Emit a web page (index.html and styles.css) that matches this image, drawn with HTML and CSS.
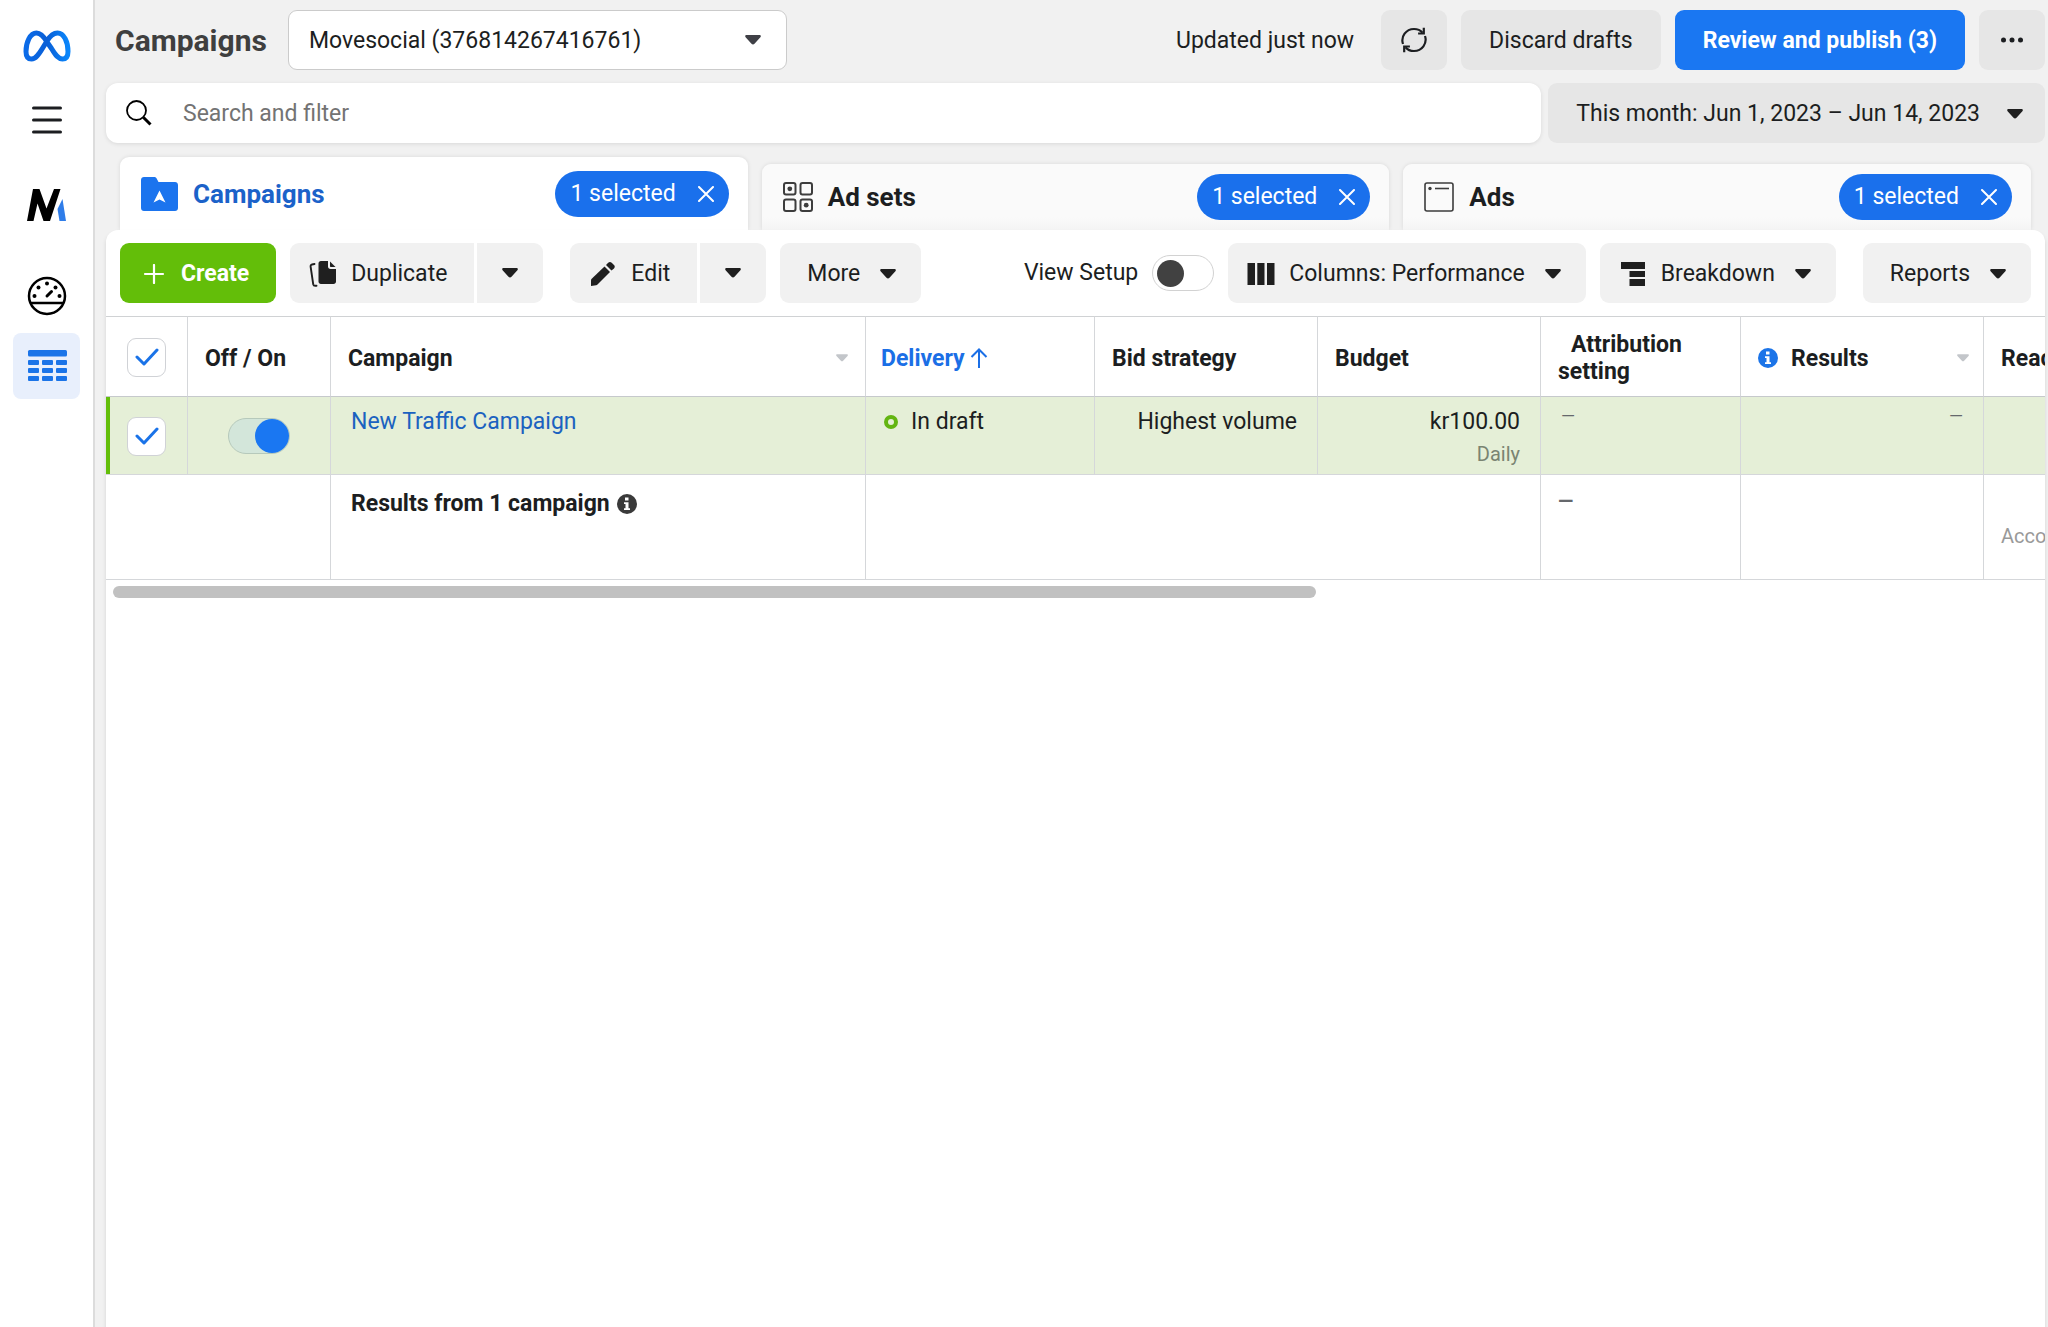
FILE: index.html
```html
<!DOCTYPE html>
<html lang="en">
<head>
<meta charset="utf-8">
<title>Campaigns</title>
<meta name="viewport" content="width=device-width, initial-scale=1">
<link rel="stylesheet" href="styles.css">
</head>
<body>
<svg class="defs" aria-hidden="true">
  <symbol id="caret" viewBox="0 0 16 10"><path d="M1.5 0h13c1.2 0 1.8 1.3.9 2.200L9.500 8.800c-.8.9-2.200.9-3 0L.6 2.200C-.2 1.300.3 0 1.500 0z"/></symbol>
  <symbol id="close" viewBox="0 0 16 16"><path d="M1 1l14 14M15 1L1 15" fill="none" stroke="currentColor" stroke-width="2" stroke-linecap="round"/></symbol>
  <symbol id="check" viewBox="0 0 24 18"><path d="M2 9l7 7L22 2" fill="none" stroke="currentColor" stroke-width="3" stroke-linecap="round" stroke-linejoin="round"/></symbol>
  <symbol id="info" viewBox="0 0 20 20"><circle cx="10" cy="10" r="10"/><path d="M8 3.500h3.500v3H8zM7 8.300h4.500v6H13V16H7v-1.700h1.500V10H7z" fill="#fff"/></symbol>
</svg>
<div class="app">
  <nav class="rail" aria-label="Main">
    <a class="rail-item" href="#" aria-label="Home">
      <svg width="48" height="32" viewBox="0 0 48 32" fill="none" stroke-width="5" stroke-linecap="round" stroke-linejoin="round">
        <defs><linearGradient id="loop" x1="0" x2="1"><stop offset="0" stop-color="#0b6be8"/><stop offset=".5" stop-color="#0a5fd6"/><stop offset="1" stop-color="#0a86fb"/></linearGradient></defs>
        <path stroke="url(#loop)" d="M24 12C20.500 6 17.500 3 13.500 3 7 3 3 12.500 3 21.500 3 26.500 5 29 8.500 29c4 0 7-4 11.500-11.500L24 11c3-5 6.500-8 10.500-8C41 3 45 12 45 21.500c0 5-2 7.500-5.500 7.500-4 0-6.500-3-11-10.500z"/>
      </svg>
    </a>
    <button class="rail-item rail-menu" type="button" aria-label="Menu">
      <svg width="30" height="28" viewBox="0 0 30 28" stroke="#1c1e21" stroke-width="3" stroke-linecap="round"><path d="M1.500 2h27M1.500 14h27M1.500 26h27"/></svg>
    </button>
    <a class="rail-item rail-brand" href="#" aria-label="Movesocial">
      <svg width="40" height="34" viewBox="0 0 40 34"><path d="M6 1h6.500l7 19.500L27 1h6.500L23 33h-6.500L10.500 15.500 6.500 33H0z"/><path d="M35.500 11L39 33h-6.500l-2-12z" fill="#2f7de9"/></svg>
    </a>
    <a class="rail-item rail-gauge" href="#" aria-label="Account overview">
      <svg width="40" height="40" viewBox="0 0 40 40"><g fill="none" stroke="#000"><circle cx="20" cy="20" r="18" stroke-width="2.500"/><path d="M3 27h34" stroke-width="2.500"/><path d="M20 20l4.500-4.500" stroke-width="3" stroke-linecap="round"/></g><circle cx="7.500" cy="20" r="2"/><circle cx="11.500" cy="11.500" r="2"/><circle cx="20" cy="7.500" r="2"/><circle cx="28.500" cy="11.500" r="2"/><circle cx="32.500" cy="20" r="2"/></svg>
    </a>
    <a class="rail-item rail-active" href="#" aria-label="Campaigns" aria-current="page">
      <svg width="40" height="32" viewBox="0 0 40 32" fill="#1b74e8"><rect x="1" width="39" height="6.500" rx="1.500"/><rect x="1" y="10" width="11" height="5" rx="1"/><rect x="15" y="10" width="11" height="5" rx="1"/><rect x="29" y="10" width="11" height="5" rx="1"/><rect x="1" y="18" width="11" height="5" rx="1"/><rect x="15" y="18" width="11" height="5" rx="1"/><rect x="29" y="18" width="11" height="5" rx="1"/><rect x="1" y="26" width="11" height="5" rx="1"/><rect x="15" y="26" width="11" height="5" rx="1"/><rect x="29" y="26" width="11" height="5" rx="1"/></svg>
    </a>
  </nav>

  <main class="main">
    <header class="topbar">
      <h1 class="title">Campaigns</h1>
      <div class="account">
        <select class="account-select" aria-label="Ad account"><option>Movesocial (376814267416761)</option></select>
        <svg class="account-caret" width="16" height="10"><use href="#caret"/></svg>
      </div>
      <span class="updated">Updated just now</span>
      <button class="btn btn-gray btn-icon" type="button" aria-label="Refresh">
        <svg width="26" height="26" viewBox="0 0 26 26" fill="none" stroke="currentColor" stroke-width="2.200"><path d="M2 17C-.5 9.500 5 2 13 2c3.500 0 6.500 1.300 8.500 3.800M24 9c2.500 7.500-3 15-11 15-3.500 0-6.500-1.300-8.500-3.800"/><path d="M22.800.8v5.700h-5.700M3.200 25.200v-5.700h5.700"/></svg>
      </button>
      <button class="btn btn-gray" type="button">Discard drafts</button>
      <button class="btn btn-blue" type="button">Review and publish (3)</button>
      <button class="btn btn-gray btn-icon" type="button" aria-label="More options">
        <svg width="22" height="6" viewBox="0 0 22 6" fill="currentColor"><circle cx="2.500" cy="3" r="2.500"/><circle cx="11" cy="3" r="2.500"/><circle cx="19.500" cy="3" r="2.500"/></svg>
      </button>
    </header>

    <div class="filters">
      <div class="search">
        <svg width="26" height="26" viewBox="0 0 26 26" fill="none" stroke="#000"><circle cx="10.500" cy="10.500" r="9.500" stroke-width="1.800"/><path d="M17.500 17.500l7 7" stroke-width="3"/></svg>
        <input class="search-input" type="search" placeholder="Search and filter" aria-label="Search and filter">
      </div>
      <button class="btn btn-gray btn-date" type="button" aria-haspopup="dialog">This month: Jun 1, 2023 – Jun 14, 2023 <svg width="16" height="10"><use href="#caret"/></svg></button>
    </div>

    <div class="tabs">
      <section class="tab tab-current">
        <a class="tab-link" href="#">
          <svg width="37" height="34" viewBox="0 0 37 34"><path d="M3 0h10c1 0 2 .5 2.500 1.300L17.500 5H34c1.700 0 3 1.300 3 3v23c0 1.700-1.300 3-3 3H3c-1.700 0-3-1.300-3-3V3c0-1.700 1.300-3 3-3z" fill="#1b74ee"/><path d="M18.500 13.500l6 12-6-3-6 3z" fill="#fff"/></svg>
          Campaigns</a>
        <button class="pill" type="button">1 selected <svg width="16" height="16"><use href="#close"/></svg></button>
      </section>
      <section class="tab">
        <a class="tab-link" href="#">
          <svg width="30" height="30" viewBox="0 0 30 30" fill="none" stroke="#3d3d3d" stroke-width="2"><rect x="1" y="1" width="11.500" height="11.500" rx="2"/><rect x="17.500" y="1" width="11.500" height="11.500" rx="2"/><rect x="1" y="17.500" width="11.500" height="11.500" rx="2"/><rect x="17.500" y="17.500" width="11.500" height="11.500" rx="2"/><g fill="#3d3d3d" stroke="none"><circle cx="6.800" cy="6.800" r="2.400"/><circle cx="23.200" cy="23.200" r="2.400"/></g></svg>
          Ad sets</a>
        <button class="pill" type="button">1 selected <svg width="16" height="16"><use href="#close"/></svg></button>
      </section>
      <section class="tab">
        <a class="tab-link" href="#">
          <svg width="30" height="30" viewBox="0 0 30 30" fill="none" stroke="#3d3d3d" stroke-width="1.600"><rect x="1" y="1" width="28" height="28" rx="2"/><path d="M11 6.500h14"/><circle cx="6" cy="6.500" r="1.700" fill="#3d3d3d" stroke="none"/></svg>
          Ads</a>
        <button class="pill" type="button">1 selected <svg width="16" height="16"><use href="#close"/></svg></button>
      </section>
    </div>

    <section class="panel">
      <div class="toolbar">
        <button class="btn btn-green" type="button"><svg width="28" height="20" viewBox="0 0 28 20"><path d="M14 1v18M5 10h18" stroke="#fff" stroke-width="2.200" stroke-linecap="round"/></svg> Create</button>
        <div class="split">
          <button class="btn btn-tool btn-lead" type="button"><svg width="28" height="26" viewBox="0 0 28 26" fill="#1f1f1f"><path d="M12 0h7v5.500C19 7 20 8 21.500 8H27v12.500c0 1.500-1 2.500-2.500 2.500H12c-1.500 0-2.500-1-2.500-2.500v-18C9.500 1 10.500 0 12 0z"/><path d="M21 .5L26.500 6H22c-.6 0-1-.4-1-1z"/><path d="M5.500 3L3 3.500c-1 .2-1.600 1-1.400 2l2.600 17.700c.2 1 1 1.600 2 1.600h1.300" fill="none" stroke="#1f1f1f" stroke-width="1.900" stroke-linecap="round"/></svg> Duplicate</button>
          <button class="btn btn-tool btn-icon" type="button" aria-label="Duplicate options"><svg width="16" height="10"><use href="#caret"/></svg></button>
        </div>
        <div class="split split-edit">
          <button class="btn btn-tool btn-lead" type="button"><svg width="28" height="24" viewBox="0 0 28 24" fill="#1f1f1f"><path d="M15.500 4.500l5.500 5.500L8.500 22.500c-.4.400-.8.600-1.400.7L2 24v-5.500c0-.7.200-1.200.7-1.700z"/><path d="M17 3l2.200-2.200c1-1 2.500-1 3.500 0l2.300 2.300c1 1 1 2.300 0 3.300L22.500 8.500z"/></svg> Edit</button>
          <button class="btn btn-tool btn-icon" type="button" aria-label="Edit options"><svg width="16" height="10"><use href="#caret"/></svg></button>
        </div>
        <button class="btn btn-tool btn-drop" type="button" aria-haspopup="menu">More <svg width="16" height="10"><use href="#caret"/></svg></button>
        <label class="view-setup" for="view-setup">View Setup <input class="switch" type="checkbox" id="view-setup"></label>
        <button class="btn btn-tool btn-lead btn-drop" type="button" aria-haspopup="menu"><svg class="lead" width="28" height="22" viewBox="0 0 28 22" fill="#1f1f1f"><path d="M.5 0h7.500v22H.5zM10.300 0h7.200v22h-7.200zM20 0h7.500v22H20z"/></svg> Columns: Performance <svg width="16" height="10"><use href="#caret"/></svg></button>
        <button class="btn btn-tool btn-lead btn-drop" type="button" aria-haspopup="menu"><svg class="lead" width="28" height="24" viewBox="0 0 28 24" fill="#1f1f1f"><path d="M2 0h24v7H2zM10.500 9H26v6H10.500zM10.500 17H26v7H10.500z"/></svg> Breakdown <svg width="16" height="10"><use href="#caret"/></svg></button>
        <button class="btn btn-tool btn-drop btn-reports" type="button" aria-haspopup="menu">Reports <svg width="16" height="10"><use href="#caret"/></svg></button>
      </div>

      <div class="table-wrap">
        <table class="grid">
          <colgroup><col class="c-check"><col class="c-toggle"><col class="c-name"><col class="c-delivery"><col class="c-bid"><col class="c-bid"><col class="c-attr"><col class="c-results"><col></colgroup>
          <thead>
            <tr>
              <th class="center"><label class="tick"><input type="checkbox" aria-label="Select all" checked><svg width="24" height="18"><use href="#check"/></svg></label></th>
              <th>Off / On</th>
              <th><span class="head">Campaign <svg class="sort" width="12" height="8"><use href="#caret"/></svg></span></th>
              <th class="sorted"><span class="head">Delivery <svg width="18" height="20" viewBox="0 0 18 20" fill="none" stroke="currentColor" stroke-width="2"><path d="M9 20V2M1.500 9L9 1.500 16.500 9"/></svg></span></th>
              <th>Bid strategy</th>
              <th>Budget</th>
              <th class="indent">Attribution setting</th>
              <th class="results"><span class="head"><svg class="info" width="20" height="20" fill="#1b74e8"><use href="#info"/></svg> Results <svg class="sort" width="12" height="8"><use href="#caret"/></svg></span></th>
              <th>Reach</th>
            </tr>
          </thead>
          <tbody>
            <tr class="row">
              <td class="center mark"><label class="tick"><input type="checkbox" aria-label="Select New Traffic Campaign" checked><svg width="24" height="18"><use href="#check"/></svg></label></td>
              <td class="center"><input class="switch" type="checkbox" aria-label="New Traffic Campaign on" checked></td>
              <td><a class="name" href="#">New Traffic Campaign</a></td>
              <td><span class="status">In draft</span></td>
              <td class="num">Highest volume</td>
              <td class="num">kr100.00<small class="sub">Daily</small></td>
              <td class="muted">—</td>
              <td class="num muted">—</td>
              <td></td>
            </tr>
          </tbody>
          <tfoot>
            <tr class="total">
              <td colspan="2"></td>
              <td><strong class="sum">Results from 1 campaign <svg width="20" height="20" fill="#3a3a3a"><use href="#info"/></svg></strong></td>
              <td colspan="3"></td>
              <td class="tight muted"><strong>—</strong></td>
              <td></td>
              <td class="tight"><br><small class="sub sub-light">Accounts</small></td>
            </tr>
          </tfoot>
        </table>
      </div>
      <div class="scroll"><div class="thumb"></div></div>
    </section>
  </main>
</div>
</body>
</html>
```

FILE: styles.css
```css
*, *::before { box-sizing: border-box; }

body {
  margin: 0;
  background: #f1f1f1;
  color: #1c1e21;
  font: 400 23px/32px Roboto, "Liberation Sans", sans-serif;
}

button, input, select { font: inherit; color: inherit; margin: 0; }
button { border: 0; cursor: pointer; }
a { text-decoration: none; color: inherit; }
svg { display: block; flex: none; }
.defs { position: absolute; width: 0; height: 0; }

.app { display: flex; min-height: 100vh; }

/* Left rail */
.rail {
  flex: none;
  width: 95px;
  padding: 13px;
  background: #fff;
  border-right: 2px solid #dcdcdc;
  display: flex;
  flex-direction: column;
}
.rail-item {
  width: 67px;
  height: 66px;
  display: grid;
  place-items: center;
  background: none;
  padding: 0;
}
.rail-menu { margin-top: 8px; }
.rail-brand { margin-top: 19px; }
.rail-gauge { margin-top: 25px; }
.rail-active { margin-top: 4px; background: #e8effc; border-radius: 8px; }

.main {
  flex: 1;
  min-width: 0;
  padding: 10px 3px 0 11px;
  display: flex;
  flex-direction: column;
}

/* Buttons */
.btn {
  display: flex;
  align-items: center;
  justify-content: center;
  height: 60px;
  padding: 2px 27px 0;
  border-radius: 9px;
  white-space: nowrap;
  fill: #1f1f1f;
}
.btn-gray { background: #e6e6e6; padding: 2px 28px 0; }
.btn-blue { background: #1a77f2; color: #fff; font-weight: 700; padding: 2px 28px 0; }
.btn-green { background: #63be09; color: #fff; font-weight: 700; padding-left: 20px; gap: 13px; }
.btn-tool { background: #f1f1f1; }
.btn-lead { padding-left: 19px; gap: 14px; }
.btn-drop { padding-right: 25px; gap: 20px; }
.btn-drop .lead { margin-right: -6px; }
.btn-date { padding-right: 22px; gap: 27px; }
.btn-icon { width: 66px; padding: 0; }

/* Top bar */
.topbar { display: flex; align-items: center; gap: 14px; }
.title { margin: 0 7px 0 9px; padding-top: 2px; font-size: 30px; font-weight: 700; color: #3f3f3f; }
.account { position: relative; width: 499px; }
.account-select {
  appearance: none;
  display: block;
  width: 100%;
  height: 60px;
  padding: 2px 60px 0 20px;
  background: #fff;
  border: 1px solid #cbcbcb;
  border-radius: 9px;
}
.account-caret { position: absolute; right: 26px; top: 25px; fill: #3f4046; pointer-events: none; }
.updated { margin: 0 13px 0 auto; padding-top: 2px; }

.filters { display: flex; gap: 7px; margin-top: 13px; }
.search {
  flex: 1;
  display: flex;
  align-items: center;
  gap: 31px;
  height: 60px;
  padding: 0 20px;
  background: #fff;
  border-radius: 12px;
  box-shadow: 0 1px 4px rgba(0, 0, 0, .1);
}
.search-input { flex: 1; border: 0; padding: 2px 0 0; outline: 0; background: none; appearance: none; }
.search-input::placeholder { color: #737373; opacity: 1; }

/* Tabs */
.tabs { display: flex; align-items: flex-end; gap: 14px; margin-top: 14px; padding: 0 14px; }
.tab {
  flex: 1;
  display: flex;
  align-items: center;
  justify-content: space-between;
  height: 66px;
  padding: 0 19px 0 21px;
  background: linear-gradient(#fafafa 80%, #f4f4f4);
  border-radius: 9px 9px 0 0;
  box-shadow: 0 0 4px rgba(0, 0, 0, .1);
}
.tab-current { height: 73px; background: #fff; color: #1b62c9; }
.tab-link { display: flex; align-items: center; gap: 15px; font-size: 26px; font-weight: 700; }
.pill {
  display: flex;
  align-items: center;
  gap: 22px;
  height: 46px;
  padding: 0 15px;
  border-radius: 23px;
  background: #1a70ec;
  color: #fff;
}

/* Panel */
.panel {
  position: relative;
  flex: 1;
  background: #fff;
  border-radius: 12px 12px 0 0;
  box-shadow: 0 3px 4px rgba(0, 0, 0, .12);
}
.toolbar { display: flex; align-items: center; gap: 14px; padding: 13px 14px; }
.split { display: flex; gap: 3px; }
.split .btn:first-child { border-radius: 9px 0 0 9px; }
.split .btn:last-child { border-radius: 0 9px 9px 0; }
.split-edit { margin-left: 13px; }
.view-setup { display: flex; align-items: center; gap: 14px; margin-left: auto; white-space: nowrap; }
.btn-reports { margin-left: 13px; }

.switch {
  appearance: none;
  display: inline-flex;
  align-items: center;
  width: 62px;
  height: 36px;
  padding: 0 4px;
  border: 1px solid #d2d2d2;
  border-radius: 18px;
  background: #fff;
}
.switch::before { content: ""; width: 27px; height: 27px; border-radius: 50%; background: #414141; }
.switch:checked { justify-content: flex-end; padding: 0; background: #d3e6da; border-color: #b6c9bb; }
.switch:checked::before { width: 34px; height: 34px; background: #1a77f2; }

.tick { display: inline-grid; place-items: center; vertical-align: middle; color: #1a73e8; }
.tick input {
  grid-area: 1 / 1;
  appearance: none;
  width: 39px;
  height: 39px;
  border: 1px solid #d0d2d6;
  border-radius: 9px;
  background: #fff;
}
.tick svg { grid-area: 1 / 1; pointer-events: none; z-index: 1; }

/* Table */
.table-wrap { overflow: hidden; }
.grid { width: 100%; table-layout: fixed; border-collapse: separate; border-spacing: 0; }
.c-check { width: 82px; }
.c-toggle { width: 143px; }
.c-name { width: 535px; }
.c-delivery { width: 229px; }
.c-bid { width: 223px; }
.c-attr { width: 200px; }
.c-results { width: 243px; }
th, td { border-right: 1px solid #d5d7da; border-bottom: 1px solid #d5d7da; overflow: hidden; }
th:last-child, td:last-child { border-right: 0; white-space: nowrap; }
th {
  height: 81px;
  padding: 3px 17px 0;
  border-top: 1px solid #d0d2d4;
  border-bottom-color: #c6c9cc;
  text-align: left;
  line-height: 27px;
}
.indent { text-indent: 13px; }
.head { display: flex; align-items: center; gap: 5px; }
.sorted { color: #1b6fe6; padding-left: 15px; }
.results { padding-right: 14px; }
.sort { margin-left: auto; fill: #c3c6ca; }
.info { margin-right: 8px; }
td { padding: 9px 20px 0; vertical-align: top; }
th.center, td.center { padding: 1px 0 0; text-align: center; vertical-align: middle; }
.center .switch, .center .tick { vertical-align: middle; }
.row td { height: 78px; background: #e5efd7; }
.row .mark { box-shadow: inset 4px 0 #63be09; }
.name { color: #1b62c0; }
.status { display: flex; align-items: center; gap: 13px; }
.status::before { content: ""; width: 14px; height: 14px; border: 4px solid #63b511; border-radius: 50%; }
.row td:nth-child(4) { padding-left: 18px; }
.num { text-align: right; }
.sub { display: block; font-size: 20px; color: #7a8472; }
.sub-light { color: #999; }
.muted { color: #65686c; font-size: 18px; line-height: 20px; }
.total td { height: 105px; padding-top: 13px; }
.total .tight { padding-left: 17px; }
.total .muted { font-size: 20px; line-height: 27px; }
.sum { display: flex; align-items: center; gap: 7px; }

.scroll { display: grid; grid-template-columns: 5fr 3fr; padding: 6px 7px; }
.thumb { height: 12px; border-radius: 6px; background: #c1c1c1; }
```
